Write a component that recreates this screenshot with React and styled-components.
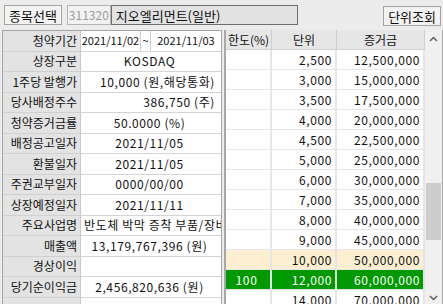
import React from "react";
import styled, { createGlobalStyle } from "styled-components";

const GlobalStyle = createGlobalStyle`
  html, body {
    margin: 0;
    padding: 0;
    background: #ececec;
  }
  body {
    font-family: "Noto Sans CJK KR", "Noto Sans", sans-serif;
    font-size: 12px;
    color: #111;
  }
`;

const infoRows = [
  { label: "상장구분", value: "KOSDAQ", align: "center" },
  { label: "1주당 발행가", value: "10,000 (원,해당통화)", align: "right" },
  { label: "당사배정주수", value: "386,750 (주)", align: "right" },
  { label: "청약증거금률", value: "50.0000 (%)", align: "center" },
  { label: "배정공고일자", value: "2021/11/05", align: "center" },
  { label: "환불일자", value: "2021/11/05", align: "center" },
  { label: "주권교부일자", value: "0000/00/00", align: "center" },
  { label: "상장예정일자", value: "2021/11/11", align: "center" },
  { label: "주요사업명", value: "반도체 박막 증착 부품/장비 제조", align: "left" },
  { label: "매출액", value: "13,179,767,396 (원)", align: "center" },
  { label: "경상이익", value: "", align: "center" },
  { label: "당기순이익금", value: "2,456,820,636 (원)", align: "center" },
  { label: "", value: "", align: "center" },
];

const unitRows = [
  { limit: "", unit: "2,500", margin: "12,500,000" },
  { limit: "", unit: "3,000", margin: "15,000,000" },
  { limit: "", unit: "3,500", margin: "17,500,000" },
  { limit: "", unit: "4,000", margin: "20,000,000" },
  { limit: "", unit: "4,500", margin: "22,500,000" },
  { limit: "", unit: "5,000", margin: "25,000,000" },
  { limit: "", unit: "6,000", margin: "30,000,000" },
  { limit: "", unit: "7,000", margin: "35,000,000" },
  { limit: "", unit: "8,000", margin: "40,000,000" },
  { limit: "", unit: "9,000", margin: "45,000,000" },
  { limit: "", unit: "10,000", margin: "50,000,000", state: "hover" },
  { limit: "100", unit: "12,000", margin: "60,000,000", state: "selected" },
  { limit: "", unit: "14,000", margin: "70,000,000" },
];

const App = () => {
  return (
    <Screen>
      <GlobalStyle />
      <TopBar>
        <Button>종목선택</Button>
        <CodeBox>311320</CodeBox>
        <NameBox>지오엘리먼트(일반)</NameBox>
        <Spacer />
        <Button $right>단위조회</Button>
      </TopBar>

      <Body>
        <InfoPanel>
          <Label>청약기간</Label>
          <Period>
            <span>2021/11/02</span>
            <span>~</span>
            <span>2021/11/03</span>
          </Period>
          {infoRows.map((r, i) => (
            <React.Fragment key={i}>
              <Label>{r.label}</Label>
              <Value $align={r.align}>{r.value}</Value>
            </React.Fragment>
          ))}
        </InfoPanel>

        <UnitPanel>
          <UnitTable>
            <HeadCell>한도(%)</HeadCell>
            <HeadCell>단위</HeadCell>
            <HeadCell>증거금</HeadCell>
            {unitRows.map((r) => (
              <React.Fragment key={r.unit}>
                <Cell $state={r.state} $align="center">{r.limit}</Cell>
                <Cell $state={r.state}>{r.unit}</Cell>
                <Cell $state={r.state}>{r.margin}</Cell>
              </React.Fragment>
            ))}
          </UnitTable>
          <ScrollBar>
            <Arrow>
              <svg width="9" height="6" viewBox="0 0 9 6">
                <path d="M1 5 L4.5 1.5 L8 5" fill="none" stroke="#606060" strokeWidth="1.5" />
              </svg>
            </Arrow>
            <Track>
              <Thumb style={{ marginTop: 136, height: 57 }} />
            </Track>
            <Arrow>
              <svg width="9" height="6" viewBox="0 0 9 6">
                <path d="M1 1 L4.5 4.5 L8 1" fill="none" stroke="#606060" strokeWidth="1.5" />
              </svg>
            </Arrow>
          </ScrollBar>
        </UnitPanel>
      </Body>
    </Screen>
  );
};
export default App;

const Screen = styled.div`
  width: 443px;
  height: 304px;
  overflow: hidden;
  background: #ececec;
`;

const TopBar = styled.div`
  display: flex;
  align-items: center;
  height: 30px;
  padding: 0 2px 0 4px;
  box-sizing: border-box;
`;

const Button = styled.div`
  height: 20px;
  padding: 0 4px;
  box-sizing: border-box;
  border: 1px solid #a4a4a4;
  background: #f3f3f3;
  display: flex;
  align-items: center;
  font-size: 13px;
  line-height: 1;
  margin-top: ${(p) => (p.$right ? "2px" : "0")};
`;

const CodeBox = styled.div`
  margin-left: 5px;
  width: 44px;
  height: 20px;
  box-sizing: border-box;
  border: 1px solid #b4b4b4;
  background: #f2f2f2;
  color: #9a9a9a;
  display: flex;
  align-items: center;
  justify-content: center;
  font-size: 12px;
  line-height: 1;
`;

const NameBox = styled.div`
  width: 187px;
  height: 20px;
  box-sizing: border-box;
  border: 1px solid #6e6e6e;
  background: #e2e2e2;
  display: flex;
  align-items: center;
  padding-left: 4px;
  font-size: 13px;
  line-height: 1;
`;

const Spacer = styled.div`
  flex: 1;
`;

const Body = styled.div`
  display: flex;
  padding-left: 2px;
`;

const InfoPanel = styled.div`
  width: 220px;
  height: 280px;
  box-sizing: border-box;
  border: 1px solid #a4a4a4;
  border-bottom: none;
  display: grid;
  grid-template-columns: 78px 1fr;
  grid-auto-rows: 20.5px;
  background: #fff;
  overflow: hidden;
`;

const Label = styled.div`
  background: #e3e3e3;
  border-right: 1px solid #c8c8c8;
  border-bottom: 1px solid #d0d0d0;
  display: flex;
  align-items: center;
  justify-content: flex-end;
  padding-right: 3px;
  white-space: nowrap;
  line-height: 1;
`;

const Value = styled.div`
  border-bottom: 1px solid #d4d4d4;
  display: flex;
  align-items: center;
  justify-content: ${(p) =>
    p.$align === "right" ? "flex-end" : p.$align === "left" ? "flex-start" : "center"};
  padding: 0 6px 0 3px;
  white-space: nowrap;
  overflow: hidden;
  line-height: 1;
  letter-spacing: 0.6px;
`;

const Period = styled.div`
  border-bottom: 1px solid #d4d4d4;
  display: grid;
  grid-template-columns: 60px 10px 1fr;
  line-height: 1;
  font-size: 11px;

  span {
    display: flex;
    align-items: center;
    justify-content: center;
    white-space: nowrap;
    overflow: hidden;
    border-right: 1px solid #cfcfcf;
  }
  span:last-child {
    border-right: none;
  }
`;

const UnitPanel = styled.div`
  flex: 1;
  height: 276px;
  margin-left: 2px;
  border-left: 2px solid #a8a8a8;
  border-right: 1px solid #a8a8a8;
  display: flex;
  background: #fff;
  overflow: hidden;
`;

const UnitTable = styled.div`
  width: 199px;
  display: grid;
  grid-template-columns: 46px 65px 1fr;
  grid-auto-rows: 20px;
  align-content: start;
`;

const HeadCell = styled.div`
  background: #e6e6e6;
  border-right: 1px solid #cfcfcf;
  border-bottom: 1px solid #cfcfcf;
  display: flex;
  align-items: center;
  justify-content: center;
  line-height: 1;
  white-space: nowrap;
`;

const Cell = styled.div`
  background: ${(p) =>
    p.$state === "hover" ? "#fdf0d2" : p.$state === "selected" ? "#009a00" : "#fff"};
  color: ${(p) => (p.$state === "selected" ? "#fff" : "#111")};
  border-right: 2px solid #e6e6e6;
  border-bottom: 1px solid #e6e6e6;
  display: flex;
  align-items: center;
  justify-content: ${(p) => (p.$align === "center" ? "center" : "flex-end")};
  padding-right: 3px;
  line-height: 1;
  white-space: nowrap;
  letter-spacing: 0.6px;
`;

const ScrollBar = styled.div`
  width: 17px;
  background: #f0f0f0;
  display: flex;
  flex-direction: column;
`;

const Arrow = styled.div`
  height: 17px;
  display: flex;
  align-items: center;
  justify-content: center;
`;

const Track = styled.div`
  flex: 1;
  display: flex;
  flex-direction: column;
  align-items: center;
`;

const Thumb = styled.div`
  width: 15px;
  background: #cdcdcd;
`;
